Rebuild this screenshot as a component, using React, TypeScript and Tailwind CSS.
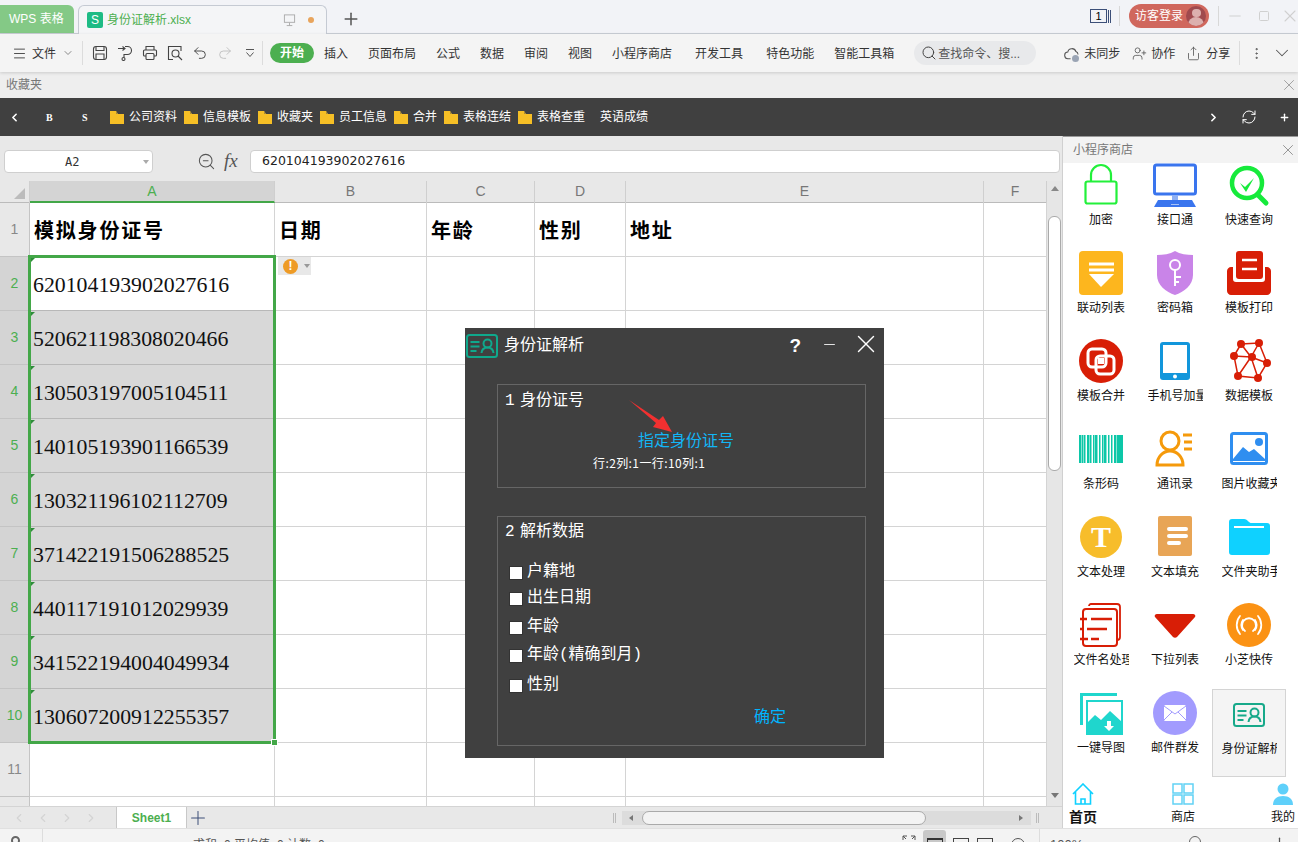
import React from 'react';
import { ChevronDown, ChevronLeft, ChevronRight, Menu, MoreVertical, Plus, Redo2, RefreshCw, Search, Share, Undo2, X, Minus, Square, UserPlus, ZoomOut } from 'lucide-react';

const cjk = "font-['Liberation_Sans','Noto_Sans_CJK_SC',sans-serif]";

const IdCard = ({ c = '#17a98a', w = 2 }: { c?: string; w?: number }) => (
  <svg viewBox="0 0 32 24" className="w-full h-full" fill="none" stroke={c} strokeWidth={w}>
    <rect x="1" y="1" width="30" height="22" rx="2.5" />
    <path d="M4.5 8h9M4.5 12.5h9M4.5 17h6" />
    <circle cx="21.5" cy="9.5" r="4" />
    <path d="M15.5 19c.5-4 3-5.500 6-5.500s5.500 1.500 6 5.500" />
  </svg>
);

const Svg = ({ children }: { children: React.ReactNode }) => (
  <svg viewBox="0 0 44 44" className="w-[44px] h-[44px] block">{children}</svg>
);

const Tool = ({ children }: { children: React.ReactNode }) => (
  <svg viewBox="0 0 16 16" className="w-[16px] h-[16px]" fill="none" stroke="#444" strokeWidth="1.100">
    {children}
  </svg>
);

const storeIcons: Record<string, React.ReactNode> = {
  加密: (
    <Svg>
      <path d="M12 19v-7a10 10 0 0 1 20 0v7" fill="none" stroke="#22f03a" strokeWidth="2.2" />
      <rect x="6.500" y="18.500" width="31" height="22" rx="2" fill="#fff" stroke="#22f03a" strokeWidth="2.2" />
    </Svg>
  ),
  接口通: (
    <Svg>
      <rect x="1.500" y="2" width="41" height="29" rx="2" fill="#fff" stroke="#3a75ee" strokeWidth="3" />
      <rect x="19" y="32" width="6" height="5" fill="#8fb0f3" />
      <path d="M5 37h34l4 7H1z" fill="#3a75ee" />
      <rect x="18" y="41" width="8" height="1" fill="#a9c3f7" />
    </Svg>
  ),
  快速查询: (
    <Svg>
      <circle cx="20" cy="20" r="15" fill="#fff" stroke="#16ea3b" strokeWidth="4.500" />
      <path d="M31 32l8 8" stroke="#16ea3b" strokeWidth="5" strokeLinecap="round" />
      <path d="M13 20l5 4 9-9-8 14z" fill="#16ea3b" />
    </Svg>
  ),
  联动列表: (
    <Svg>
      <rect width="44" height="44" rx="4" fill="#fdb61e" />
      <path d="M10 13h25M10 19h25" stroke="#fff" strokeWidth="3" />
      <path d="M10 23h25L22 36z" fill="#fff" />
    </Svg>
  ),
  密码箱: (
    <Svg>
      <path d="M22 0c5 3 12 4 18 4v20c0 10-9 17-18 20C13 41 4 34 4 24V4c6 0 13-1 18-4z" fill="#c984e8" />
      <circle cx="22" cy="14" r="5" fill="none" stroke="#fff" strokeWidth="2" />
      <path d="M22 19v16M22 26h6M22 31h4" stroke="#fff" strokeWidth="2" fill="none" />
    </Svg>
  ),
  模板打印: (
    <Svg>
      <path d="M4 16h2v12c0 2 1 3 3 3h26c2 0 3-1 3-3V16h2c2 0 4 2 4 4v20c0 2-2 4-4 4H4c-2 0-4-2-4-4V20c0-2 2-4 4-4z" fill="#d81e06" />
      <rect x="9" y="0" width="27" height="28" rx="3" fill="#d81e06" />
      <path d="M15 9h15M15 18h15" stroke="#fff" strokeWidth="2.500" />
    </Svg>
  ),
  模板合并: (
    <Svg>
      <circle cx="22" cy="22" r="22" fill="#d81e06" />
      <rect x="9" y="10" width="18" height="18" rx="4" fill="none" stroke="#fff" strokeWidth="3" />
      <rect x="17" y="17" width="18" height="18" rx="4" fill="none" stroke="#fff" strokeWidth="3" />
      <rect x="19" y="19" width="6" height="6" fill="#fff" />
    </Svg>
  ),
  手机号加量: (
    <Svg>
      <rect x="7" y="3" width="30" height="38" rx="3" fill="#1296db" />
      <rect x="10" y="6" width="24" height="28" fill="#fff" />
      <circle cx="22" cy="37.500" r="2" fill="#fff" />
    </Svg>
  ),
  数据模板: (
    <Svg>
      <path d="M14 5L32 4 40 24 31 39 11 37 7 17zM14 5l10 13M7 17l17 1 8-14M24 18l16 6M24 18l7 21M24 18L11 37" fill="none" stroke="#d81e06" strokeWidth="1.500" />
      {[[14, 5], [32, 4], [40, 24], [31, 39], [11, 37], [7, 17], [25, 18]].map(([x, y]) => (
        <circle key={x} cx={x} cy={y} r="4" fill="#d81e06" />
      ))}
    </Svg>
  ),
  条形码: (
    <Svg>
      {[0, 3, 5, 8, 11, 14, 16, 20, 23, 25, 29, 32, 35, 38].map((x, i) => (
        <rect key={x} x={x} y="8" width={i % 3 === 0 ? 2.500 : 1.500} height="28" fill="#0cc7a8" />
      ))}
      <rect x="38" y="8" width="6" height="28" fill="#0cc7a8" />
    </Svg>
  ),
  通讯录: (
    <Svg>
      <circle cx="17" cy="14" r="9" fill="none" stroke="#f59a0b" strokeWidth="3" />
      <path d="M4 38c0-8 6-14 13-14s13 6 13 14z" fill="none" stroke="#f59a0b" strokeWidth="3" />
      <path d="M30 8h9M31 15h8M31 22h8" stroke="#f59a0b" strokeWidth="3" />
    </Svg>
  ),
  图片收藏夹: (
    <Svg>
      <rect x="4.500" y="6.500" width="35" height="30" rx="2" fill="#fff" stroke="#2f8ef0" strokeWidth="3" />
      <path d="M6 32l10-12 6 5 5-3 11 10v2H6z" fill="#2f8ef0" />
      <circle cx="32" cy="15" r="4" fill="#2f8ef0" />
    </Svg>
  ),
  文本处理: (
    <Svg>
      <circle cx="22" cy="22" r="21" fill="#f7bd2b" />
      <text x="22" y="32" textAnchor="middle" fontFamily="Liberation Serif" fontWeight="700" fontSize="30" fill="#fff">T</text>
    </Svg>
  ),
  文本填充: (
    <Svg>
      <rect x="5" y="1" width="34" height="40" rx="2" fill="#e8a556" />
      <path d="M16 14h17M16 21h17M16 28h10" stroke="#fff" strokeWidth="4" strokeLinecap="round" />
    </Svg>
  ),
  文件夹助手: (
    <Svg>
      <path d="M2 7c0-2 1-3 3-3h12c2 0 3 1 5 3 1 1 2 1 3 1h15c2 0 3 1 3 3v26c0 2-1 3-3 3H5c-2 0-3-1-3-3z" fill="#0fd1ff" />
      <rect x="7" y="11" width="30" height="2" fill="#fff" />
    </Svg>
  ),
  文件名处理: (
    <Svg>
      <path d="M10 3c0-1 1-2 2-2h26c2 0 3 1 3 3v30c0 2-1 3-3 3" fill="none" stroke="#d81e06" strokeWidth="1.800" />
      <rect x="4" y="6" width="34" height="37" rx="3" fill="#fff" stroke="#d81e06" strokeWidth="2" />
      <path d="M1 16h7M12 16h21M1 26h2M8 26h20M1 36h8M12 36h8" stroke="#d81e06" strokeWidth="2.500" />
    </Svg>
  ),
  下拉列表: (
    <Svg>
      <path d="M4 11h36c2 0 3 2 2 3L24 34c-1 1-3 1-4 0L2 14c-1-1 0-3 2-3z" fill="#d81e06" />
    </Svg>
  ),
  小芝快传: (
    <Svg>
      <circle cx="22" cy="22" r="22" fill="#fb9214" />
      <g fill="none" stroke="#fff" strokeWidth="1.800" strokeLinecap="round">
        <path d="M13 13a14 14 0 0 0 0 18M31 13a14 14 0 0 1 0 18M16 17a9 9 0 0 0 0 10M28 17a9 9 0 0 1 0 10" />
        <path d="M18 28a7 7 0 1 1 8 0" />
      </g>
    </Svg>
  ),
  一键导图: (
    <Svg>
      <path d="M38 2H1v32h3V5h34z" fill="#1fd6cd" />
      <rect x="8" y="10" width="35" height="34" fill="#fff" stroke="#1fd6cd" strokeWidth="2" />
      <path d="M8 44V32l8-8 6 5 9-9 12 11v13z" fill="#1fd6cd" />
      <path d="M28 30h4v5h3l-5 5-5-5h3z" fill="#fff" />
    </Svg>
  ),
  邮件群发: (
    <Svg>
      <circle cx="22" cy="22" r="22" fill="#a29bfe" />
      <rect x="11" y="14" width="22" height="16" rx="1.500" fill="#fff" />
      <path d="M11 15l11 8 11-8M11 29l8-8M33 29l-8-8" fill="none" stroke="#a29bfe" strokeWidth="1" />
    </Svg>
  ),
  身份证解析: (
    <div className="w-[44px] h-[44px] flex items-center justify-center pt-[1px]">
      <div className="w-[32px] h-[24px]">
        <IdCard />
      </div>
    </div>
  ),
};

const ids = [
  '620104193902027616', '520621198308020466', '130503197005104511', '140105193901166539', '130321196102112709',
  '371422191506288525', '440117191012029939', '341522194004049934', '130607200912255357',
];

const columns = ['A', 'B', 'C', 'D', 'E', 'F'];
const headers = ['模拟身份证号', '日期', '年龄', '性别', '地址', ''];
const gridCols = 'grid grid-cols-[30px_245px_152px_108px_91px_358px_63px]';

const ribbonTabs = [
  ['插入', 'ml-[10px]'], ['页面布局', 'ml-[20px]'], ['公式', 'ml-[20px]'], ['数据', 'ml-[20px]'], ['审阅', 'ml-[20px]'],
  ['视图', 'ml-[20px]'], ['小程序商店', 'ml-[20px]'], ['开发工具', 'ml-[23px]'], ['特色功能', 'ml-[23px]'], ['智能工具箱', 'ml-[20px]'],
];

const bookmarks = ['公司资料', '信息模板', '收藏夹', '员工信息', '合并', '表格连结', '表格查重'];

const checks = [
  ['户籍地', 'mt-[19px]'], ['出生日期', 'mt-[6px]'], ['年龄', 'mt-[9px]'], ['年龄(精确到月)', 'mt-[8px]'], ['性别', 'mt-[10px]'],
];

const Folder = () => (
  <svg viewBox="0 0 14 13" className="w-[14px] h-[13px] shrink-0">
    <path d="M0 0h6l2 3h6v10H0z" fill="#f6bf26" />
    <path d="M6 0l2 3H6z" fill="#a88a3a" />
  </svg>
);

const App: React.FC = () => {
  return (
    <div className={`relative w-[1298px] h-[842px] overflow-hidden bg-white flex flex-col ${cjk}`}>
      {/* title bar */}
      <div className="h-[34px] shrink-0 bg-[#f2f3f7] border-b border-[#c9ced6] flex items-end">
        <div className="w-[74px] h-[28px] bg-[#84c986] rounded-tr-[6px] text-white text-[12px] flex items-center pl-[9px]">WPS 表格</div>
        <div className="ml-[4px] w-[249px] h-[29px] -mb-[1px] bg-[#f4f5f7] border border-b-0 border-[#c5cad3] rounded-t-[6px] flex items-center pl-[8px]">
          <div className="w-[16px] h-[16px] rounded-[2px] bg-[#1dbb85] text-white text-[12px] leading-[16px] text-center">S</div>
          <span className="ml-[4px] text-[12px] text-[#4caf50]">身份证解析.xlsx</span>
          <svg viewBox="0 0 14 14" className="ml-[92px] w-[13px] h-[14px]" fill="none" stroke="#aaa">
            <rect x="1.500" y="1.500" width="11" height="8" />
            <path d="M7 10v3M4 13h6" />
          </svg>
          <div className="ml-[12px] w-[6px] h-[6px] rounded-full bg-[#e8a45c]" />
        </div>
        <Plus className="ml-[14px] mb-[4px] w-[20px] h-[20px] text-[#555]" strokeWidth={1.800} />
        <div className="ml-auto h-[34px] flex items-center">
          <div className="w-[17px] h-[14px] border border-[#3c4f78] text-[11px] leading-[12px] text-center text-black">1</div>
          <div className="ml-[1px] w-[3px] h-[13px] border-x border-[#3c4f78]" />
          <div className="ml-[8px] w-px h-[20px] bg-[#d8d8d8]" />
          <div className="ml-[9px] w-[80px] h-[24px] rounded-full bg-[#d0675d] flex items-center pl-[6px] text-white text-[12px]">
            访客登录
            <div className="ml-[3px] w-[20px] h-[20px] rounded-full bg-[#a04a4e] overflow-hidden flex flex-col items-center">
              <div className="mt-[3px] w-[9px] h-[9px] rounded-full bg-[#dcb0ae]" />
              <div className="w-[16px] h-[10px] rounded-t-full bg-[#dcb0ae]" />
            </div>
          </div>
          <div className="ml-[9px] w-px h-[20px] bg-[#d8d8d8]" />
          <Minus className="ml-[7px] w-[18px] h-[18px] text-[#d0d0d0]" strokeWidth={1.300} />
          <Square className="ml-[14px] w-[12px] h-[12px] text-[#d0d0d0]" strokeWidth={2} />
          <X className="ml-[10px] -mr-[2px] w-[20px] h-[20px] text-[#d0d0d0]" strokeWidth={1.300} />
        </div>
      </div>

      {/* ribbon */}
      <div className="relative z-10 h-[38px] shrink-0 bg-[#f4f4f4] shadow-[0_1px_3px_rgba(0,0,0,0.15)] flex items-center pl-[12px] text-[12px] text-[#333] whitespace-nowrap">
        <Menu className="w-[15px] h-[15px] text-[#444]" strokeWidth={1.500} />
        <span className="ml-[5px] w-[24px] pt-[1px]">文件</span>
        <ChevronDown className="ml-[6px] w-[12px] h-[12px] text-[#888]" />
        <div className="ml-[8px] w-px h-[24px] bg-[#dcdcdc]" />
        <div className="ml-[4px] w-[175px] flex items-center">
          <div className="w-[25px] flex justify-center">
            <Tool>
              <rect x="1.500" y="1.500" width="13" height="13" rx="2.500" />
              <path d="M4 2v3.500h8V2M4 14.500V9h8v5.500" />
            </Tool>
          </div>
          <div className="w-[25px] flex justify-center">
            <Tool>
              <path d="M1 3.500h7M5.500 1.500L8 3.500 5.500 5.500" />
              <path d="M8 1.500h2.500a3.500 3.500 0 0 1 0 8H7v3" />
              <circle cx="6.500" cy="14" r="1.500" />
            </Tool>
          </div>
          <div className="w-[25px] flex justify-center">
            <Tool>
              <path d="M4 5V1.500h8V5M4 11H2.500a1 1 0 0 1-1-1V6a1 1 0 0 1 1-1h11a1 1 0 0 1 1 1v4a1 1 0 0 1-1 1H12" />
              <rect x="4" y="8.500" width="8" height="6" rx="1" />
            </Tool>
          </div>
          <div className="w-[25px] flex justify-center">
            <Tool>
              <path d="M14 6V1.500H1.500v13H6" />
              <circle cx="8.500" cy="8.500" r="3.500" />
              <path d="M11 11l4 4" />
            </Tool>
          </div>
          <div className="w-[25px] flex justify-center">
            <Undo2 className="w-[16px] h-[16px] text-[#444]" strokeWidth={1.400} />
          </div>
          <div className="w-[25px] flex justify-center">
            <Redo2 className="w-[16px] h-[16px] text-[#c0c0c0]" strokeWidth={1.400} />
          </div>
          <div className="w-[25px] flex justify-center">
            <svg viewBox="0 0 8 9" className="w-[8px] h-[9px]" fill="none" stroke="#555">
              <path d="M0 .5h8M.5 3.500L4 7.500l3.500-4" />
            </svg>
          </div>
        </div>
        <div className="w-px h-[24px] bg-[#dcdcdc]" />
        <div className="ml-[7px] w-[44px] h-[20px] rounded-full bg-[#4caf50] text-white font-bold text-center leading-[21px]">开始</div>
        {ribbonTabs.map(([t, m]) => (
          <span key={t} className={`${m} pt-[1px]`}>{t}</span>
        ))}
        <div className="ml-[20px] w-[122px] h-[24px] rounded-full bg-[#e8e9eb] flex items-center pl-[7px] text-[#555]">
          <Search className="w-[16px] h-[16px] text-[#444]" strokeWidth={1.500} />
          <span className="ml-[1px] pt-[1px]">查找命令、搜...</span>
        </div>
        <div className="relative ml-[28px] w-[15px] h-[15px]">
          <svg viewBox="0 0 16 16" className="w-[15px] h-[15px]" fill="none" stroke="#555" strokeWidth="1.100">
            <path d="M7 13.500H4.500a3.500 3.500 0 0 1-.5-7 4.500 4.500 0 0 1 8.700-.6 3.500 3.500 0 0 1 2.300 3.100" />
          </svg>
          <div className="absolute right-[0px] bottom-[-1px] w-[7px] h-[7px] rounded-full bg-[#9aa4b4]" />
        </div>
        <span className="ml-[5px] pt-[1px]">未同步</span>
        <UserPlus className="ml-[12px] w-[15px] h-[15px] text-[#555]" strokeWidth={1.300} />
        <span className="ml-[4px] pt-[1px]">协作</span>
        <Share className="ml-[11px] w-[15px] h-[15px] text-[#555]" strokeWidth={1.300} />
        <span className="ml-[5px] pt-[1px]">分享</span>
        <div className="ml-[9px] w-px h-[24px] bg-[#dcdcdc]" />
        <MoreVertical className="ml-[9px] w-[15px] h-[15px] text-[#555]" strokeWidth={1.500} />
        <ChevronDown className="ml-[7px] w-[22px] h-[22px] text-[#555]" strokeWidth={1.100} />
      </div>

      {/* favourites */}
      <div className="h-[26px] shrink-0 bg-[#eeeeee] flex items-center justify-between pl-[6px] text-[12px] text-[#777]">
        <span>收藏夹</span>
        <X className="w-[18px] h-[18px] text-[#888]" strokeWidth={1} />
      </div>

      {/* bookmark bar */}
      <div className="h-[38px] shrink-0 bg-[#404040] flex items-center text-white text-[12px] whitespace-nowrap">
        <ChevronLeft className="ml-[8px] w-[13px] h-[13px]" strokeWidth={3} />
        <span className="ml-[25px] w-[8px] text-[10px] font-bold font-['Liberation_Serif']">B</span>
        <span className="ml-[28px] w-[8px] text-[10px] font-bold font-['Liberation_Serif']">S</span>
        <div className="ml-[20px] flex items-center">
          {bookmarks.map((b) => (
            <div key={b} className="flex items-center mr-[7px]">
              <Folder />
              <span className="ml-[5px]">{b}</span>
            </div>
          ))}
          <span className="ml-[8px]">英语成绩</span>
        </div>
        <ChevronRight className="ml-auto w-[13px] h-[13px]" strokeWidth={3} />
        <RefreshCw className="ml-[21px] w-[16px] h-[16px]" strokeWidth={1.500} />
        <Plus className="ml-[22px] mr-[8px] w-[11px] h-[11px]" strokeWidth={3} />
      </div>

      {/* main area */}
      <div className="h-[692px] shrink-0 flex">
        <div className="w-[1062px] flex flex-col bg-[#e8e8e8]">
          {/* formula bar */}
          <div className="h-[45px] shrink-0 flex items-end pb-[8px] pl-[4px]">
            <div className="w-[149px] h-[23px] bg-white border border-[#cfcfcf] rounded-[4px] flex items-center">
              <span className="ml-[60px] text-[12px] font-['DejaVu_Sans_Mono'] text-[#333]">A2</span>
              <svg viewBox="0 0 6 4" className="ml-auto mr-[3px] w-[6px] h-[4px]"><path d="M0 0h6L3 4z" fill="#aaa" /></svg>
            </div>
            <ZoomOut className="ml-[44px] mb-[2px] w-[19px] h-[19px] text-[#555]" strokeWidth={1.300} />
            <span className="ml-[8px] mb-[1px] w-[19px] text-[19px] leading-[22px] italic font-['Liberation_Serif'] text-[#555]">fx</span>
            <div className="ml-[7px] w-[810px] h-[23px] bg-white border border-[#cfcfcf] rounded-[4px] flex items-center pl-[11px] text-[12.500px] font-['DejaVu_Sans'] text-[#222]">
              620104193902027616
            </div>
          </div>

          <div className="h-[625px] flex">
            {/* sheet */}
            <div className="relative w-[1047px] h-[625px] overflow-hidden bg-white">
              <div className={`${gridCols} h-[22px] bg-[#e8e8e8] border-b border-[#bbbbbb]`}>
                <div className="flex items-end justify-end pr-[4px] pb-[4px] border-r border-[#cfcfcf]">
                  <svg viewBox="0 0 11 11" className="w-[11px] h-[11px]"><path d="M11 0v11H0z" fill="#bcbcbc" /></svg>
                </div>
                {columns.map((c, i) => (
                  <div
                    key={c}
                    className={`text-center text-[14px] leading-[20px] border-r border-[#cfcfcf] ${
                      i === 0 ? 'bg-[#d4d4d4] text-[#4caf50] border-b-2 border-b-[#43a748] h-[22px]' : 'text-[#777]'
                    }`}
                  >
                    {c}
                  </div>
                ))}
              </div>
              {Array.from({ length: 12 }, (_, r) => {
                const selected = r >= 1 && r <= 9;
                const filled = r >= 2 && r <= 9;
                return (
                  <div key={r} className={`${gridCols} ${r === 11 ? 'h-[10px]' : 'h-[54px]'}`}>
                    <div
                      className={`flex items-center justify-center text-[14px] border-r border-b border-[#c4c4c4] ${
                        selected ? 'bg-[#d4d4d4] text-[#4caf50]' : 'bg-[#e8e8e8] text-[#888]'
                      }`}
                    >
                      {r < 11 ? r + 1 : ''}
                    </div>
                    {columns.map((c, i) => (
                      <div
                        key={c}
                        className={`relative flex items-center border-r border-b ${
                          i === 0 && selected ? 'border-[#b8b8b8]' : 'border-[#d4d4d4]'
                        } ${i === 0 && filled ? 'bg-[#d8d8d8]' : 'bg-white'}`}
                      >
                        {r === 0 && (
                          <span className="pl-[4px] pt-[3px] text-[20px] font-bold tracking-[1.800px] text-black font-['Liberation_Serif','Noto_Sans_CJK_SC',serif]">
                            {headers[i]}
                          </span>
                        )}
                        {i === 0 && selected && (
                          <>
                            <svg viewBox="0 0 4 4" className="absolute left-[1px] top-[1px] w-[4px] h-[4px]"><path d="M0 0h4L0 4z" fill="#2e8b3a" /></svg>
                            <span className="pl-[3px] pt-[3px] text-[21.800px] text-[#111] font-['Liberation_Serif']">{ids[r - 1]}</span>
                          </>
                        )}
                        {i === 1 && r === 1 && (
                          <div className="absolute left-[3px] top-0 w-[33px] h-[18px] bg-[#e8e8e8] flex items-center pl-[5px]">
                            <div className="w-[15px] h-[15px] rounded-full bg-[#ee9b26] text-white text-[12px] font-bold leading-[15px] text-center">!</div>
                            <svg viewBox="0 0 6 4" className="ml-[6px] w-[6px] h-[4px]"><path d="M0 0h6L3 4z" fill="#999" /></svg>
                          </div>
                        )}
                      </div>
                    ))}
                  </div>
                );
              })}
              {/* selection frame */}
              <div className="absolute left-[28px] top-[74px] w-[248px] h-[489px] border-[3px] border-[#43a748]">
                <div className="absolute -right-[5px] -bottom-[5px] w-[7px] h-[7px] bg-[#43a748] border border-white" />
              </div>
            </div>

            {/* vertical scrollbar */}
            <div className="w-[15px] flex flex-col items-center bg-[#e6e6e6]">
              <svg viewBox="0 0 8 5" className="mt-[5px] w-[8px] h-[5px]"><path d="M4 0l4 5H0z" fill="#888" /></svg>
              <div className="mt-[25px] w-[13px] h-[255px] rounded-[6px] bg-white border border-[#aaaaaa]" />
              <svg viewBox="0 0 8 5" className="mt-auto mb-[8px] w-[8px] h-[5px]"><path d="M0 0h8L4 5z" fill="#777" /></svg>
            </div>
          </div>

          {/* sheet tabs */}
          <div className="h-[22px] shrink-0 flex items-center bg-[#e8e8e8] border-t border-[#d4d4d4]">
            <div className="w-[116px] flex items-center pl-[12px] gap-[10px] text-[#d4d4d4]">
              <ChevronLeft className="w-[14px] h-[14px]" />
              <ChevronLeft className="w-[14px] h-[14px]" />
              <ChevronRight className="w-[14px] h-[14px]" />
              <ChevronRight className="w-[14px] h-[14px]" />
            </div>
            <div className="w-[71px] h-[22px] bg-white border-x border-b border-[#c8c8c8] text-center text-[12px] leading-[22px] font-bold text-[#4caf50]">Sheet1</div>
            <Plus className="w-[22px] h-[22px] text-[#3c4f78]" strokeWidth={1.100} />
            <div className="ml-auto w-[3px] h-[10px] border-x border-[#bbb]" />
            <div className="ml-[6px] w-[409px] h-[14px] bg-[#dcdcdc] flex items-center pl-[7px]">
              <svg viewBox="0 0 4 6" className="w-[4px] h-[6px]"><path d="M4 0v6L0 3z" fill="#777" /></svg>
              <div className="ml-[9px] w-[284px] h-[14px] rounded-full bg-[#f3f3f3] border border-[#aaaaaa]" />
              <svg viewBox="0 0 4 6" className="ml-auto mr-[8px] w-[4px] h-[6px]"><path d="M0 0v6l4-3z" fill="#777" /></svg>
            </div>
            <div className="ml-[5px] mr-[23px] w-[3px] h-[10px] border-x border-[#bbb]" />
          </div>
        </div>

        {/* mini program store */}
        <div className="w-[236px] flex flex-col bg-white border-l border-[#d0d0d0] overflow-hidden">
          <div className="h-[27px] shrink-0 bg-[#f3f3f3] border-t border-[#999] flex items-center justify-between pl-[10px] pr-[1px] text-[12px] text-[#777]">
            <span>小程序商店</span>
            <X className="w-[18px] h-[18px] text-[#777]" strokeWidth={1} />
          </div>
          <div className="w-[222px] ml-[1px] grid grid-cols-3 text-[12px] text-[#111]">
            {Object.keys(storeIcons).map((name, i) => (
              <div
                key={name}
                className={`flex flex-col items-center ${i < 3 ? 'h-[86px]' : 'h-[88px] pt-[2px]'} ${
                  name === '身份证解析' ? 'bg-[#f4f4f4] border border-[#d4d4d4]' : ''
                }`}
              >
                {storeIcons[name]}
                <div className="mt-[4px] w-[55px] h-[18px] leading-[18px] text-center whitespace-nowrap overflow-hidden">{name}</div>
              </div>
            ))}
          </div>
          <div className="mt-auto h-[47px] pt-[2px] flex text-[12px] text-[#111] whitespace-nowrap">
            <div className="w-[40px] flex flex-col items-center shrink-0">
              <svg viewBox="0 0 22 22" className="w-[22px] h-[22px]" fill="none" stroke="#0fd1ff" strokeWidth="1.600">
                <path d="M1 11L11 1l10 10M3.500 9v12h15V9" />
                <path d="M9 21v-5h4v5" />
              </svg>
              <span className="mt-[1px] text-[14px] font-bold leading-[22px]">首页</span>
            </div>
            <div className="ml-[60px] w-[40px] flex flex-col items-center shrink-0">
              <svg viewBox="0 0 22 22" className="w-[22px] h-[22px]" fill="none" stroke="#62d2f5" strokeWidth="1.500">
                <rect x="1" y="1" width="9" height="9" />
                <rect x="12" y="1" width="9" height="9" />
                <rect x="1" y="12" width="9" height="9" />
                <rect x="12" y="12" width="9" height="9" />
              </svg>
              <span className="mt-[1px] leading-[22px]">商店</span>
            </div>
            <div className="ml-[60px] w-[40px] flex flex-col items-center shrink-0">
              <svg viewBox="0 0 22 22" className="w-[22px] h-[22px]" fill="#5fd0fa">
                <circle cx="11" cy="6" r="5.500" />
                <path d="M1 22c0-6 4-9 10-9s10 3 10 9z" />
              </svg>
              <span className="mt-[1px] leading-[22px]">我的</span>
            </div>
          </div>
        </div>
      </div>

      {/* status bar */}
      <div className="h-[30px] shrink-0 bg-[#f3f3f3] border-t border-[#e0e0e0] flex items-start text-[12px] text-[#555] whitespace-nowrap">
        <div className="ml-[11px] mt-[7px] w-[9px] h-[9px] rounded-full border-2 border-[#666]" />
        <div className="ml-[22px] w-px h-[14px] bg-[#ddd]" />
        <span className="ml-[150px] mt-[7px]">求和=0  平均值=0  计数=0</span>
        <div className="ml-auto flex items-start">
          <svg viewBox="0 0 14 6" className="mt-[6px] w-[14px] h-[6px]" fill="none" stroke="#555">
            <path d="M1 5V1h4M1 1l3 3M13 5V1H9M13 1l-3 3" />
          </svg>
          <div className="ml-[7px] w-[23px] h-[14px] bg-[#c8c8c8] rounded-t-[3px] mt-[1px] flex justify-center pt-[8px]">
            <div className="w-[16px] h-[12px] border border-[#333] border-t-2" />
          </div>
          <div className="ml-[7px] mt-[9px] w-[16px] h-[12px] border border-[#444]" />
          <div className="ml-[8px] mt-[9px] w-[16px] h-[12px] border border-[#444]" />
          <div className="ml-[18px] mt-[9px] w-[14px] h-[14px] rounded-full border border-[#555]" />
          <div className="ml-[14px] w-px h-[14px] bg-[#ddd]" />
          <span className="ml-[10px] mt-[6px] w-[32px] text-[13px]">100%</span>
          <Minus className="ml-[19px] mt-[6px] w-[15px] h-[15px]" />
          <div className="ml-[73px] mt-[7px] w-[12px] h-[12px] rounded-full border border-[#666]" />
          <Plus className="ml-[71px] mr-[11px] mt-[6px] w-[15px] h-[15px]" />
        </div>
      </div>

      {/* dialog */}
      <div className="absolute left-[465px] top-[328px] w-[419px] h-[430px] bg-[#404040] text-white text-[16px] font-['Liberation_Mono','Noto_Sans_CJK_SC',monospace]">
        <div className="h-[56px] flex items-start pt-[6px]">
          <div className="ml-[1px] w-[32px] h-[24px]">
            <IdCard c="#0fa88c" />
          </div>
          <span className="ml-[6px] pt-[2px] leading-[21px]">身份证解析</span>
          <span className="ml-auto pt-[1px] text-[19px] leading-[21px] font-bold font-['Liberation_Sans']">?</span>
          <Minus className="ml-[20px] mt-[2px] w-[17px] h-[17px]" strokeWidth={1.200} />
          <X className="ml-[13px] mr-[3px] -mt-[5px] w-[30px] h-[30px]" strokeWidth={1.100} />
        </div>
        <div className="relative ml-[32px] w-[369px] h-[104px] border border-[#666666] pl-[7px] pt-[5px]">
          <div className="flex leading-[22px]"><span className="w-[10px]">1</span><span className="ml-[5px]">身份证号</span></div>
          <div className="absolute left-[140px] top-[46px] leading-[22px] text-[#12b5f5]">指定身份证号</div>
          <div className="absolute left-[95px] top-[70px] text-[12px] leading-[16px] whitespace-nowrap font-['Noto_Sans_CJK_SC',sans-serif] tracking-[0.400px]">行:2列:1一行:10列:1</div>
        </div>
        <div className="mt-[28px] ml-[32px] w-[369px] h-[230px] border border-[#666666] pl-[7px] pt-[4px] relative">
          <div className="flex leading-[22px]"><span className="w-[10px]">2</span><span className="ml-[5px]">解析数据</span></div>
          {checks.map(([label, m]) => (
            <div key={label} className={`flex items-center h-[20px] ml-[5px] ${m}`}>
              <div className="w-[12px] h-[12px] mt-[1px] bg-white shadow-[0_0_0_1px_#333]" />
              <span className="ml-[5px]">{label}</span>
            </div>
          ))}
          <div className="absolute left-[256px] top-[190px] leading-[22px] text-[#00b4ff]">确定</div>
        </div>
        {/* annotation arrow */}
        <svg viewBox="0 0 46 34" className="absolute left-[163px] top-[71px] w-[46px] h-[34px]">
          <path d="M1 1l30 20 4-4 9 16-19-5 3-4z" fill="#f23030" />
        </svg>
      </div>
    </div>
  );
};

export default App;
